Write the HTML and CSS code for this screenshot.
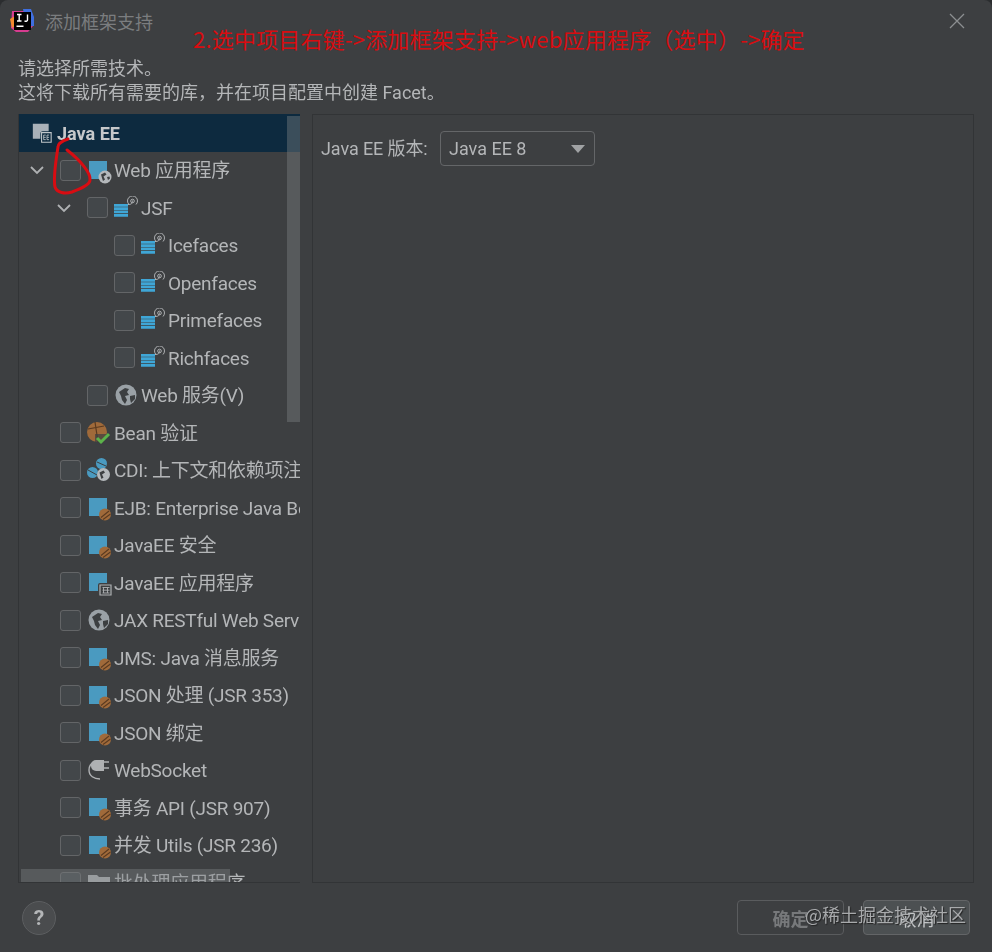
FILE: index.html
```html
<!DOCTYPE html>
<html lang="zh-CN">
<head>
<meta charset="utf-8">
<title>添加框架支持</title>
<link rel="stylesheet" href="styles.css">
</head>
<body>
<svg class="defs" width="0" height="0" aria-hidden="true">
  <defs>
    <symbol id="chev" viewBox="0 0 16 16"><path d="M2 5l6 6 6-6" fill="none" stroke="#afb1b3" stroke-width="1.8"/></symbol>
    <symbol id="bean" viewBox="0 0 24 24">
      <path d="M1 1h18v11a7 7 0 0 0-7 7H1z" fill="#4a9ac0"/>
      <circle cx="17" cy="17.500" r="6" fill="#a06a3a"/>
      <path d="M13 20.500L21 14M15 22.500L22.500 17" stroke="#5a3a20" stroke-width="1.100"/>
    </symbol>
    <symbol id="webapp" viewBox="0 0 24 24">
      <path d="M1 1h18v10a7 7 0 0 0-7 7v1H1z" fill="#4a9ac0"/>
      <circle cx="17" cy="17" r="6.500" fill="#b4b8bb"/>
      <path d="M13 14.500l4-2 1.500 2-3 2 1.500 3-2 1.500-1-3zM19 17l2.500-.5.500 2-2 1.500z" fill="#3c3f41"/>
    </symbol>
    <symbol id="app" viewBox="0 0 24 24">
      <path d="M1 1h18v10h-7a2 2 0 0 0-2 2v6H1z" fill="#4a9ac0"/>
      <path d="M12 13h11v10H12z" fill="#3c3f41" stroke="#afb1b3" stroke-width="1.200"/>
      <path d="M15.500 15.500v5.500M19.500 15.500v5.500M14.500 15.500h7M14.500 18.200h7M14.500 21h7" stroke="#afb1b3" stroke-width=".9"/>
    </symbol>
    <symbol id="eeapp" viewBox="0 0 24 24">
      <path d="M1 1h19v9h-7a3 3 0 0 0-3 3v6H1z" fill="#a9b1b8"/>
      <path d="M11.500 11.500h11.500v11.500H11.500z" fill="#0d2a3f" stroke="#c0c6ca" stroke-width="1.300"/>
      <path d="M14 14.500h2.500M14 17.200h2.500M14 20h2.500M14 14.500V20M18 14.500h2.500M18 17.200h2.500M18 20h2.500M18 14.500V20" stroke="#c0c6ca" stroke-width="1"/>
    </symbol>
    <symbol id="jsf" viewBox="0 0 24 24">
      <path d="M0 8h14v2.700H0zM0 11.300h14V14H0zM0 14.600h14v2.700H0zM0 17.900h14v2.800H0z" fill="#3fa6d6"/>
      <path d="M14 8.500c3.500 0 4.500-1 4.500-4" fill="none" stroke="#afb1b3" stroke-width="1"/>
      <circle cx="18.500" cy="5" r="1.800" fill="none" stroke="#afb1b3" stroke-width="1"/>
      <path d="M15 8.500a5 5 0 1 1 7 0" fill="none" stroke="#afb1b3" stroke-width="1"/>
    </symbol>
    <symbol id="globe" viewBox="0 0 24 24">
      <circle cx="12" cy="12" r="10.500" fill="#9aa1a6"/>
      <path d="M5 9l6-4 4 1-2 3 2 3-4 1 2 4-2 4-3-4-1-4zM16 13l5-1 0 4-4 4-1-4z" fill="#3c3f41"/>
    </symbol>
    <symbol id="beanval" viewBox="0 0 24 24">
      <circle cx="10" cy="11" r="10" fill="#a06a3a"/>
      <path d="M1 8L17 5M8 1l3 20" stroke="#5a3a20" stroke-width="1.200"/>
      <path d="M8 13h15v11H8z" fill="#3c3f41" opacity=".7"/>
      <path d="M10 17l4 4 8-8" fill="none" stroke="#5cb34a" stroke-width="3"/>
    </symbol>
    <symbol id="cdi" viewBox="0 0 24 24">
      <ellipse cx="14.500" cy="5.500" rx="5.500" ry="5.500" fill="#4a9ac0"/>
      <ellipse cx="5.500" cy="14.500" rx="5.500" ry="5.500" fill="#4a9ac0"/>
      <path d="M10 4l9 4M1 12l9 5" stroke="#3c3f41" stroke-width="1"/>
      <circle cx="16.500" cy="16.500" r="6.500" fill="#b4b8bb"/>
      <path d="M12.500 14.500l4-2 1.500 2-3 2 1.500 3-2 1.500-1-3z" fill="#3c3f41"/>
    </symbol>
    <symbol id="plug" viewBox="0 0 24 24">
      <path d="M9 2h8v11H9a5 5 0 0 1-5-5V7a5 5 0 0 1 5-5z" fill="#afb1b3"/>
      <path d="M17 4h5M17 10h5" stroke="#afb1b3" stroke-width="1.600"/>
      <path d="M7 4a9 9 0 0 0-5 8c0 6 5 9 11 9" fill="none" stroke="#afb1b3" stroke-width="1.400"/>
    </symbol>
    <symbol id="folder" viewBox="0 0 24 24"><path d="M1 4h9l2 2h11v15H1z" fill="#afb1b3"/></symbol>
  </defs>
</svg>

<div class="dialog">
  <header class="titlebar">
    <svg class="logo" viewBox="0 0 26 26" aria-hidden="true">
      <path d="M3 3h15l6 3v12l-5 6H7l-5-4z" fill="#d63c8f"/>
      <path d="M14 1h8l3 8v9h-8z" fill="#3f6fe0"/>
      <path d="M1 11l5-3v10l-3 2z" fill="#f28a2e"/>
      <rect x="5" y="4" width="17" height="18" fill="#000"/>
      <rect x="7.500" y="17.500" width="7" height="1.500" fill="#fff"/>
      <path d="M8 6.500h4.500M10.200 6.500v6.500M8 13h4.500M18.500 6.500v5.500c0 1-1 1.500-3 1" fill="none" stroke="#fff" stroke-width="1.400"/>
    </svg>
    <span class="dialog-title">添加框架支持</span>
    <svg class="close" viewBox="0 0 16 16" aria-hidden="true"><path d="M1 1l14 14M15 1L1 15" stroke="#8c8f91" stroke-width="1.300"/></svg>
  </header>

  <p class="intro">请选择所需技术。<br>这将下载所有需要的库，并在项目配置中创建 Facet。</p>

  <main class="panes">
    <section class="tree">
      <div class="row row-head"><svg class="ico ico-head"><use href="#eeapp"/></svg><span class="head-label">Java EE</span></div>
      <div class="row l1"><svg class="chev"><use href="#chev"/></svg><i class="cb"></i><svg class="ico sq"><use href="#webapp"/></svg><span>Web 应用程序</span></div>
      <div class="row l2"><svg class="chev"><use href="#chev"/></svg><i class="cb"></i><svg class="ico"><use href="#jsf"/></svg><span>JSF</span></div>
      <div class="row l3"><i class="cb"></i><svg class="ico"><use href="#jsf"/></svg><span>Icefaces</span></div>
      <div class="row l3"><i class="cb"></i><svg class="ico"><use href="#jsf"/></svg><span>Openfaces</span></div>
      <div class="row l3"><i class="cb"></i><svg class="ico"><use href="#jsf"/></svg><span>Primefaces</span></div>
      <div class="row l3"><i class="cb"></i><svg class="ico"><use href="#jsf"/></svg><span>Richfaces</span></div>
      <div class="row l2 leaf"><i class="cb"></i><svg class="ico"><use href="#globe"/></svg><span>Web 服务(V)</span></div>
      <div class="row l1 leaf"><i class="cb"></i><svg class="ico"><use href="#beanval"/></svg><span>Bean 验证</span></div>
      <div class="row l1 leaf"><i class="cb"></i><svg class="ico"><use href="#cdi"/></svg><span>CDI: 上下文和依赖项注入</span></div>
      <div class="row l1 leaf"><i class="cb"></i><svg class="ico sq"><use href="#bean"/></svg><span>EJB: Enterprise Java Beans</span></div>
      <div class="row l1 leaf"><i class="cb"></i><svg class="ico sq"><use href="#bean"/></svg><span>JavaEE 安全</span></div>
      <div class="row l1 leaf"><i class="cb"></i><svg class="ico sq"><use href="#app"/></svg><span>JavaEE 应用程序</span></div>
      <div class="row l1 leaf"><i class="cb"></i><svg class="ico"><use href="#globe"/></svg><span>JAX RESTful Web Services</span></div>
      <div class="row l1 leaf"><i class="cb"></i><svg class="ico sq"><use href="#bean"/></svg><span>JMS: Java 消息服务</span></div>
      <div class="row l1 leaf"><i class="cb"></i><svg class="ico sq"><use href="#bean"/></svg><span>JSON 处理 (JSR 353)</span></div>
      <div class="row l1 leaf"><i class="cb"></i><svg class="ico sq"><use href="#bean"/></svg><span>JSON 绑定</span></div>
      <div class="row l1 leaf"><i class="cb"></i><svg class="ico"><use href="#plug"/></svg><span>WebSocket</span></div>
      <div class="row l1 leaf"><i class="cb"></i><svg class="ico sq"><use href="#bean"/></svg><span>事务 API (JSR 907)</span></div>
      <div class="row l1 leaf"><i class="cb"></i><svg class="ico sq"><use href="#bean"/></svg><span>并发 Utils (JSR 236)</span></div>
      <div class="row l1 leaf"><i class="cb"></i><svg class="ico"><use href="#folder"/></svg><span>批处理应用程序</span></div>
      <div class="vbar"></div>
      <div class="hbar"></div>
    </section>

    <section class="detail">
      <span class="field-label">Java EE 版本:</span>
      <div class="combo"><span>Java EE 8</span><i class="combo-arrow"></i></div>
    </section>
  </main>

  <footer class="footer">
    <div class="help">?</div>
    <div class="buttons">
      <div class="btn btn-off">确定</div>
      <div class="btn btn-cancel">取消</div>
    </div>
  </footer>

  <div class="annotation">2.选中项目右键-&gt;添加框架支持-&gt;web应用程序（选中）-&gt;确定</div>
  <svg class="scribble" viewBox="0 0 45 62" aria-hidden="true"><path d="M18 4C12 6 8 9 8 12C6 25 3 42 5 52C7 58 15 59 22 57C30 54 40 50 40 45C41 38 30 25 17 15" fill="none" stroke="#d80c12" stroke-width="3" stroke-linecap="round"/></svg>
  <div class="watermark">@稀土掘金技术社区</div>
</div>
</body>
</html>
```
FILE: styles.css
```css
* { box-sizing: border-box; }
html, body { margin: 0; height: 100%; background: #2b2d2f; }
body { font-family: Roboto, "Noto Sans CJK SC", sans-serif; color: #b4b6b8; overflow: hidden; }
.defs { position: absolute; }

.dialog { position: relative; width: 992px; height: 952px; background: #3d3f41; border-radius: 8px 8px 0 0; display: flex; flex-direction: column; filter: blur(.35px); }

.titlebar { height: 42px; display: flex; align-items: center; padding: 0 27px 0 9px; flex: none; }
.logo { width: 26px; height: 26px; flex: none; }
.dialog-title { margin-left: 10px; font-size: 18px; color: #7b7d7f; }
.close { width: 16px; height: 16px; margin-left: auto; }

.intro { margin: 15px 0 0 18px; font-size: 18px; line-height: 24px; height: 48px; color: #b4b6b8; flex: none; }

.panes { margin: 9px 18px 0; display: flex; gap: 12px; height: 769px; flex: none; }

.tree { position: relative; width: 282px; flex: none; overflow: hidden; border-left: 1px solid #323436; border-bottom: 1px solid #323436; }
.row { height: 37.5px; display: flex; align-items: center; font-size: 19px; line-height: 24px; letter-spacing: -.25px; white-space: nowrap; color: #b4b6b8; }
.row > span { margin-top: 2px; }
.row-head { background: #0d2a3f; padding-left: 13px; letter-spacing: 0; }
.head-label { font-weight: 700; font-size: 18px; color: #c6c8ca; margin-left: 3px; }
.l1 { padding-left: 10px; }
.l2 { padding-left: 37px; }
.l3 { padding-left: 95px; }
.leaf.l1 { padding-left: 41px; }
.leaf.l2 { padding-left: 68px; }
.chev { width: 16px; height: 16px; flex: none; margin-right: 15px; }
.cb { width: 21px; height: 21px; flex: none; border: 1.500px solid #636567; border-radius: 3px; background: #43474a; }
.ico { width: 24px; height: 24px; flex: none; margin: 0 3px 0 6px; }
.sq { margin: 3px 2px 0 7px; }
.ico-head { margin: 0 2px 0 0; width: 20px; height: 20px; }

.vbar { position: absolute; right: 0; top: 2px; width: 13px; height: 306px; background: rgba(125,128,130,.42); }
.hbar { position: absolute; left: 2px; bottom: 0; width: 209px; height: 13px; background: rgba(125,128,130,.42); }

.detail { flex: 1; border: 1px solid #323436; padding: 16px 8px; display: flex; align-items: flex-start; }
.field-label { font-size: 18px; line-height: 35px; width: 106px; white-space: nowrap; letter-spacing: -.1px; }
.combo { margin-left: 13px; width: 155px; height: 35px; border: 1.500px solid #646668; border-radius: 4px; background: #3d3f41; font-size: 18px; display: flex; align-items: center; justify-content: space-between; padding: 0 9px 0 8px; }
.combo-arrow { width: 0; height: 0; border-left: 7px solid transparent; border-right: 7px solid transparent; border-top: 8px solid #a0a2a4; }

.footer { flex: 1; display: flex; align-items: center; justify-content: space-between; padding: 0 22px 0 22px; }
.help { width: 34px; height: 34px; border-radius: 50%; background: #4a4c4e; border: 1px solid #5c5e60; color: #b4b6b8; font-size: 21px; font-weight: 700; display: flex; align-items: center; justify-content: center; }
.buttons { display: flex; gap: 19px; }
.btn { width: 107px; height: 35px; border-radius: 4px; font-size: 18px; display: flex; align-items: center; justify-content: center; }
.btn-off { border: 1.500px solid #5a5c5e; color: #77797b; font-weight: 700; }
.btn-cancel { border: 1.500px solid #636567; background: #4c5052; color: #c4c6c8; }

.annotation { position: absolute; left: 193px; top: 21px; font-size: 22px; letter-spacing: .2px; line-height: 34px; color: #d80c10; font-family: "Noto Sans CJK SC", sans-serif; white-space: nowrap; }
.scribble { position: absolute; left: 50px; top: 135px; width: 45px; height: 62px; }
.watermark { position: absolute; left: 805px; top: 901px; font-size: 18px; line-height: 26px; color: #a8aaac; text-shadow: 1px 1px 1px #222; white-space: nowrap; font-family: "Noto Sans CJK SC", sans-serif; }
```
